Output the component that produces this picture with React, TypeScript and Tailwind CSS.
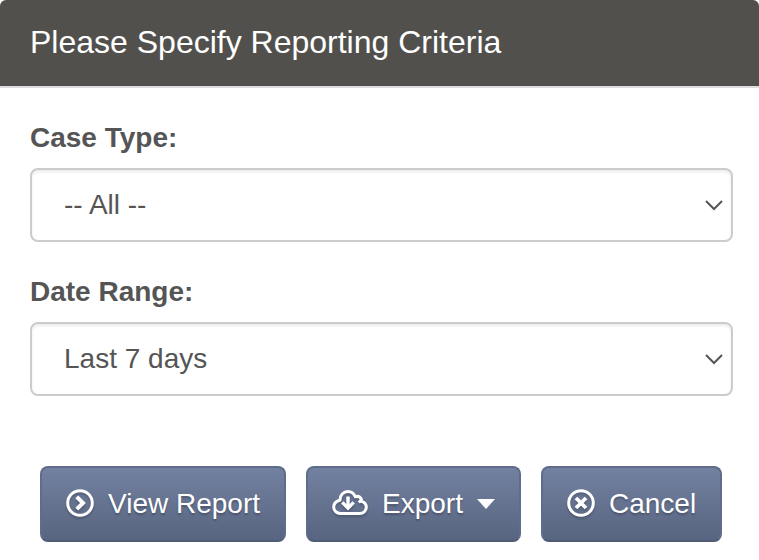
import { useState } from 'react';
import type { ReactNode } from 'react';

interface SelectFieldProps {
  id: string;
  label: string;
  value: string;
  options: string[];
  onChange: (value: string) => void;
}

function SelectField({ id, label, value, options, onChange }: SelectFieldProps) {
  return (
    <div className="flex flex-col gap-2.5">
      <label htmlFor={id} className="text-[28px] leading-10 font-bold text-[#555]">
        {label}
      </label>
      <div className="relative">
        <select
          id={id}
          value={value}
          onChange={(e) => onChange(e.target.value)}
          className="block w-full h-[74px] appearance-none rounded-lg border-2 border-[#ccc] bg-white px-8 text-[28px] text-[#555] shadow-[inset_0_2px_3px_rgba(0,0,0,0.08)]"
        >
          {options.map((option) => (
            <option key={option}>{option}</option>
          ))}
        </select>
        <svg
          viewBox="0 0 18 11"
          className="pointer-events-none absolute right-2.5 top-8 w-[18px] h-[11px]"
          fill="none"
          stroke="#555"
          strokeWidth="2"
        >
          <path d="M1 1l8 8 8-8" />
        </svg>
      </div>
    </div>
  );
}

function ActionButton({ children }: { children: ReactNode }) {
  return (
    <button
      type="button"
      className="flex h-[76px] items-center whitespace-nowrap rounded-lg border-2 border-[#5f6c8b] border-b-[#505c76] bg-linear-to-b from-[#7482a2] to-[#57647f] bg-origin-border px-6 text-[28px] text-white text-shadow-[0_2px_2px_rgba(0,0,0,0.25)] hover:to-[#4d5973]"
    >
      {children}
    </button>
  );
}

const iconClass = 'mb-0.5 h-7 shrink-0 drop-shadow-[0_2px_1px_rgba(0,0,0,0.2)]';

function ViewIcon() {
  return (
    <svg viewBox="0 0 28 28" className={`${iconClass} w-7`} fill="none" stroke="currentColor">
      <circle cx="14" cy="14" r="12.3" strokeWidth="3" />
      <path d="M10.8 7.8l6.2 6.2-6.2 6.2" strokeWidth="4" />
    </svg>
  );
}

function ExportIcon() {
  return (
    <svg viewBox="0 0 36 28" className={`${iconClass} w-9`} fill="none" stroke="currentColor" strokeLinejoin="round">
      <path
        d="M8.5 24.6h19.2c3.7 0 6.6-2.8 6.6-6.3 0-2.900-1.900-5.100-4.700-5.900.3-3.500-2.800-6-6.200-4.600-1.500-3.300-4.300-5.200-7.500-5.200-4.500 0-8 3.600-7.900 8.400C3.800 12.300 1.700 15 1.700 18c0 3.700 3 6.600 6.800 6.600z"
        strokeWidth="3"
      />
      <path d="M29.600 10.500l-2.800 3" strokeWidth="3" />
      <path d="M16 7.500v11" strokeWidth="3.400" />
      <path d="M10.300 13.400l5.700 5.700 5.700-5.700" strokeWidth="3.400" strokeLinejoin="miter" />
    </svg>
  );
}

function CancelIcon() {
  return (
    <svg viewBox="0 0 28 28" className={`${iconClass} w-7`} fill="none" stroke="currentColor">
      <circle cx="14" cy="14" r="12.3" strokeWidth="3" />
      <path d="M9 9l10 10M19 9L9 19" strokeWidth="3.8" />
    </svg>
  );
}

function App() {
  const [caseType, setCaseType] = useState('-- All --');
  const [dateRange, setDateRange] = useState('Last 7 days');

  return (
    <div className="w-full bg-white font-['Liberation_Sans',Arial,sans-serif]">
      {/* Header */}
      <header className="rounded-t-md border-b-2 border-[#ddd] bg-[#51504d] px-[30px] pt-[22px] pb-6">
        <h1 className="text-[32px] leading-10 text-white">Please Specify Reporting Criteria</h1>
      </header>

      {/* Criteria */}
      <div className="flex flex-col gap-[30px] pt-[30px] pr-[26px] pl-[30px]">
        <SelectField
          id="case-type"
          label="Case Type:"
          value={caseType}
          options={['-- All --', 'Open', 'Closed']}
          onChange={setCaseType}
        />
        <SelectField
          id="date-range"
          label="Date Range:"
          value={dateRange}
          options={['Last 7 days', 'Last 30 days', 'Last 90 days']}
          onChange={setDateRange}
        />
      </div>

      {/* Actions */}
      <div className="flex gap-5 pt-[70px] pl-10">
        <ActionButton>
          <ViewIcon />
          <span className="ml-3.5">View Report</span>
        </ActionButton>
        <ActionButton>
          <ExportIcon />
          <span className="ml-3.5">Export</span>
          <svg viewBox="0 0 18 10" className="ml-3.5 w-[18px] h-2.5 shrink-0" fill="currentColor">
            <path d="M0 0h18L9 10z" />
          </svg>
        </ActionButton>
        <ActionButton>
          <CancelIcon />
          <span className="ml-3.5">Cancel</span>
        </ActionButton>
      </div>
    </div>
  );
}

export default App;
